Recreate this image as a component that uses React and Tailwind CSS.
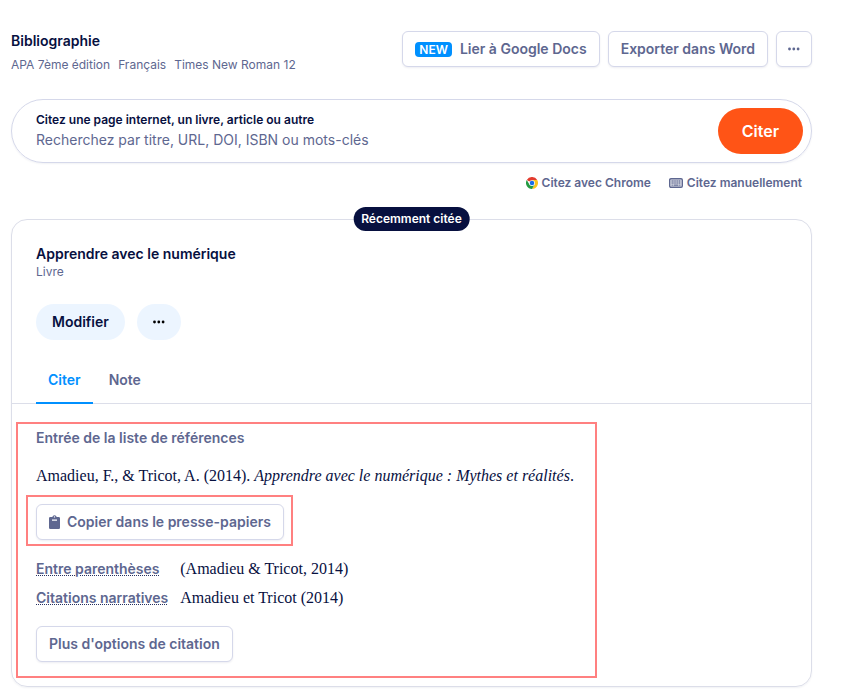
function Dots() {
  return (
    <svg width="12" height="4" viewBox="0 0 12 4" fill="currentColor" aria-hidden="true">
      <circle cx="1.5" cy="2" r="1.4" />
      <circle cx="5.8" cy="2" r="1.4" />
      <circle cx="10.1" cy="2" r="1.4" />
    </svg>
  );
}

function ChromeIcon() {
  return (
    <svg width="12" height="12" viewBox="0 0 48 48" aria-hidden="true">
      <path d="M24 24 3.2 12A24 24 0 0 1 44.8 12Z" fill="#e33b2e" />
      <path d="M24 12H44.8A24 24 0 0 1 24 48L34.4 30Z" fill="#fcc31e" />
      <path d="M13.6 30 3.2 12A24 24 0 0 0 24 48L34.4 30Z" fill="#249a41" />
      <circle cx="24" cy="24" r="11.5" fill="#fff" />
      <circle cx="24" cy="24" r="9" fill="#1a6ee8" />
    </svg>
  );
}

function KeyboardIcon() {
  return (
    <svg width="14" height="10" viewBox="0 0 14 10" fill="none" aria-hidden="true">
      <rect x="0.7" y="0.7" width="12.6" height="8.6" rx="1.2" fill="#5e6790" fillOpacity="0.15" stroke="currentColor" strokeWidth="1.4" />
      <path d="M2.5 3h9M2.5 5h9" stroke="currentColor" strokeWidth="1.4" strokeDasharray="1.3 0.6" />
      <path d="M2.5 7.2h1.3M4.5 7.2h5M10.2 7.2h1.3" stroke="currentColor" strokeWidth="1.3" />
    </svg>
  );
}

function ClipboardIcon() {
  return (
    <svg width="12" height="14" viewBox="0 0 12 14" aria-hidden="true">
      <path
        fill="currentColor"
        fillRule="evenodd"
        d="M1.3 2H3.300a2.300 2.300 0 0 1 4.400 0h2A1.300 1.300 0 0 1 11 3.300V12.700a1.300 1.300 0 0 1-1.300 1.300h-8.400A1.300 1.300 0 0 1 0 12.700V3.300a1.300 1.300 0 0 1 1.300-1.300ZM5.500 1.200a.7.7 0 1 0 0 1.400A.7.7 0 0 0 5.500 1.200ZM3 4.600v1.200h5v-1.200Z"
      />
    </svg>
  );
}

function OutlineButton({ children, className = "px-3", ...props }) {
  return (
    <button
      type="button"
      className={`flex h-9 items-center justify-center rounded-md border border-[#d5d8ea] bg-white text-sm font-semibold text-[#5e6790] shadow-[0_1px_2px_rgba(20,30,90,0.08)] ${className}`}
      {...props}
    >
      {children}
    </button>
  );
}

function Header() {
  return (
    <header className="flex items-start justify-between">
      <div>
        <h1 className="text-sm font-semibold">Bibliographie</h1>
        <ul className="mt-1 flex gap-2 text-xs leading-5 text-[#5e6790]">
          <li>APA 7ème édition</li>
          <li>Français</li>
          <li>Times New Roman 12</li>
        </ul>
      </div>
      <div className="flex gap-2">
        <OutlineButton>
          <span className="mr-2 rounded bg-[#0090ff] px-1 text-xs leading-[15px] text-white">NEW</span>
          Lier à Google Docs
        </OutlineButton>
        <OutlineButton>Exporter dans Word</OutlineButton>
        <OutlineButton className="w-9" aria-label="Plus d'actions">
          <Dots />
        </OutlineButton>
      </div>
    </header>
  );
}

function SearchBar() {
  return (
    <form
      className="mt-6 flex items-center rounded-full border border-[#d5d8ea] py-2 pr-2 pl-6 shadow-[0_1px_2px_rgba(20,30,90,0.06)]"
      onSubmit={(e) => e.preventDefault()}
    >
      <div className="flex-1 pb-0.5">
        <label htmlFor="source" className="block text-xs leading-5 font-semibold">
          Citez une page internet, un livre, article ou autre
        </label>
        <input
          id="source"
          type="text"
          placeholder="Recherchez par titre, URL, DOI, ISBN ou mots-clés"
          className="block h-5 w-full bg-transparent text-sm outline-none placeholder:text-[#5e6790]"
        />
      </div>
      <button type="submit" className="rounded-full bg-[#ff5416] px-6 py-[11px] text-base font-semibold text-white">
        Citer
      </button>
    </form>
  );
}

function InTextLabel({ children }) {
  return (
    <dt className="text-sm leading-6 font-semibold text-[#5e6790]">
      <span className="underline decoration-[#26305f] decoration-dotted decoration-1 underline-offset-1">{children}</span>
    </dt>
  );
}

function CitationPanel() {
  return (
    <div className="relative px-6 pt-6 pb-6">
      <div className="pointer-events-none absolute top-[18px] bottom-2 left-1 w-[581px] border-2 border-[#ff8080]" />
      <h3 className="text-sm font-semibold text-[#5e6790]">Entrée de la liste de références</h3>
      <p className="mt-4 font-['Liberation_Serif',serif] text-base">
        Amadieu, F., &amp; Tricot, A. (2014). <em>Apprendre avec le numérique : Mythes et réalités</em>.
      </p>
      <div className="relative mt-4 w-fit">
        <div className="pointer-events-none absolute -top-[9px] -right-[9px] -bottom-1.5 -left-2.5 border-2 border-[#ff8080]" />
        <OutlineButton>
          <span className="mr-1.5">
            <ClipboardIcon />
          </span>
          Copier dans le presse-papiers
        </OutlineButton>
      </div>
      <dl className="mt-[17px] grid grid-cols-[auto_1fr] gap-x-3 gap-y-[5px] leading-6">
        <InTextLabel>Entre parenthèses</InTextLabel>
        <dd className="font-['Liberation_Serif',serif]">(Amadieu &amp; Tricot, 2014)</dd>
        <InTextLabel>Citations narratives</InTextLabel>
        <dd className="font-['Liberation_Serif',serif]">Amadieu et Tricot (2014)</dd>
      </dl>
      <OutlineButton className="mt-4 px-3">Plus d'options de citation</OutlineButton>
    </div>
  );
}

export default function App() {
  return (
    <main className="bg-white pt-[31px] pr-[51px] pb-2 pl-[11px] font-['Inter',sans-serif] text-[#07103f]">
      <Header />
      <SearchBar />
      <nav className="mt-2.5 flex justify-end gap-[18px] pr-2.5 text-xs leading-5 font-semibold text-[#5e6790]">
        <a href="#chrome" className="flex items-center gap-1">
          <ChromeIcon />
          Citez avec Chrome
        </a>
        <a href="#manuel" className="flex items-center gap-1">
          <KeyboardIcon />
          Citez manuellement
        </a>
      </nav>
      <article className="relative mt-[26px] rounded-2xl border border-[#dcdee9] shadow-[0_1px_2px_rgba(20,30,90,0.06)]">
        <span className="absolute -top-[13px] left-1/2 -translate-x-1/2 rounded-full bg-[#07103f] px-2 text-xs leading-6 font-semibold whitespace-nowrap text-white">
          Récemment citée
        </span>
        <div className="px-6 pt-6">
          <h2 className="text-sm font-semibold">Apprendre avec le numérique</h2>
          <p className="text-xs text-[#5e6790]">Livre</p>
          <div className="mt-6 flex gap-3">
            <button type="button" className="h-9 rounded-full bg-[#ecf5ff] px-4 text-sm font-semibold">
              Modifier
            </button>
            <button
              type="button"
              aria-label="Autres actions"
              className="flex h-9 w-11 items-center justify-center rounded-full bg-[#ecf5ff] text-black"
            >
              <Dots />
            </button>
          </div>
        </div>
        <div role="tablist" className="mt-4 flex border-b border-[#dcdee9] px-6 text-sm font-semibold">
          <button
            type="button"
            role="tab"
            aria-selected="true"
            className="-mb-px h-12 border-b-2 border-[#0090ff] px-3 pt-0.5 text-[#0090ff]"
          >
            Citer
          </button>
          <button
            type="button"
            role="tab"
            aria-selected="false"
            className="-mb-px ml-1 h-12 border-b-2 border-transparent px-3 pt-0.5 text-[#5e6790]"
          >
            Note
          </button>
        </div>
        <CitationPanel />
      </article>
    </main>
  );
}
